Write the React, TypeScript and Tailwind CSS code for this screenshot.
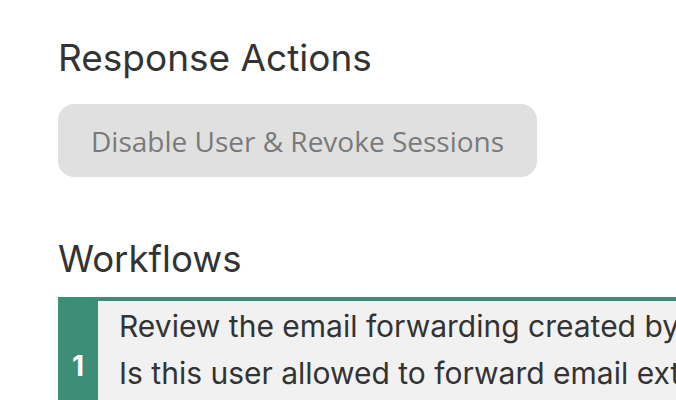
import React from 'react';

const steps = [
  {
    n: 1,
    lines: [
      'Review the email forwarding created by the user for the mailbox',
      'Is this user allowed to forward email externally to this address?',
    ],
  },
];

export default function App() {
  return (
    <div className="w-[676px] h-[400px] overflow-hidden bg-white font-['Inter',sans-serif] text-[#333]">
      <div className="pl-[58px] pt-[36px] w-[1000px]">
        <h2 className="text-[37px] leading-[44px] font-normal text-[#333]">Response Actions</h2>

        <button className="mt-[24px] h-[73px] px-[33px] rounded-[16px] bg-[#e0e0e0] text-[28px] text-[#7a7a7a] font-['Open_Sans',sans-serif]">
          Disable User &amp; Revoke Sessions
        </button>

        <h2 className="mt-[60px] text-[36.6px] leading-[44px] font-normal text-[#333]">Workflows</h2>

        <div className="mt-[16px] border-t-4 border-[#3d8e76]">
          {steps.map((s) => (
            <div key={s.n} className="flex">
              <div className="w-[40px] shrink-0 bg-[#3d8e76] flex items-center justify-center text-white text-[28px] font-bold">
                {s.n}
              </div>
              <div className="flex-1 bg-[#f1f1f1] pl-[21px] pt-[2px] pb-[34px] text-[30px] leading-[47px] whitespace-nowrap">
                {s.lines.map((l) => (
                  <div key={l}>{l}</div>
                ))}
              </div>
            </div>
          ))}
        </div>
      </div>
    </div>
  );
}
